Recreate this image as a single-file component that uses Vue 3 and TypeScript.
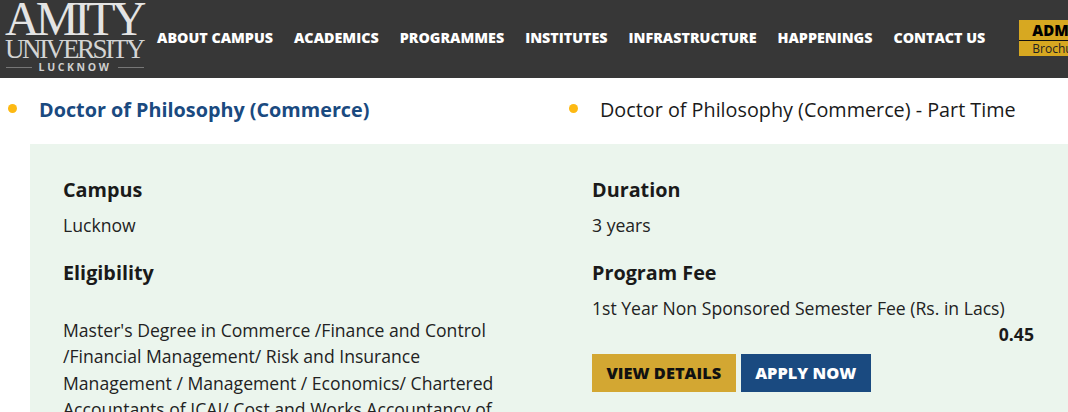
<script setup lang="ts">
const nav: string[] = ['About Campus','Academics','Programmes','Institutes','Infrastructure','Happenings','Contact Us']
</script>

<template>
  <div class="page">
    <header class="header">
      <div class="logo">
        <div class="l1">AMITY</div>
        <div class="l2">UNIVERSITY</div>
        <div class="l3"><i></i><span>LUCKNOW</span><i></i></div>
      </div>
      <nav class="nav">
        <a v-for="n in nav" :key="n">{{ n }}</a>
      </nav>
      <div class="adm">
        <div class="adm1">ADMISSIONS</div>
        <div class="adm2">Brochure</div>
      </div>
    </header>
    <div class="tabs">
      <div class="tab active"><b class="dot"></b><span>Doctor of Philosophy (Commerce)</span></div>
      <div class="tab"><b class="dot"></b><span>Doctor of Philosophy (Commerce) - Part Time</span></div>
    </div>
    <section class="panel">
      <div class="col left">
        <h4>Campus</h4>
        <p>Lucknow</p>
        <h4 class="second">Eligibility</h4>
        <p class="elig">Master's Degree in Commerce /Finance and Control /Financial Management/ Risk and Insurance Management / Management / Economics/ Chartered Accountants of ICAI/ Cost and Works Accountancy of</p>
      </div>
      <div class="col right">
        <h4>Duration</h4>
        <p>3 years</p>
        <h4 class="second">Program Fee</h4>
        <p class="feelabel">1st Year Non Sponsored Semester Fee (Rs. in Lacs)</p>
        <div class="fee">0.45</div>
        <div class="btns">
          <a class="btn gold">VIEW DETAILS</a>
          <a class="btn blue">APPLY NOW</a>
        </div>
      </div>
    </section>
  </div>
</template>

<style>
html, body { margin: 0; overflow: hidden; background: #fff; }
</style>

<style scoped>
.page { width: 1068px; height: 412px; overflow: hidden; font-family: "Open Sans", sans-serif; color: #1a1a1a; }
.header { height: 78px; background: #373737; display: flex; align-items: flex-start; box-sizing: border-box; padding-left: 5px; overflow: hidden; }
.logo { width: 140px; flex: none; color: #e4e4e4; font-family: "Liberation Serif", serif; margin-top: 1px; }
.l1 { font-size: 48px; line-height: 35px; letter-spacing: -4px; white-space: nowrap; height: 36px; }
.l2 { font-size: 27px; line-height: 23px; letter-spacing: -2.4px; white-space: nowrap; color: #d4d4d4; margin-top: 1px; }
.l3 { display: flex; align-items: center; gap: 7px; font-family: "Open Sans", sans-serif; font-weight: 700; font-size: 10.5px; line-height: 13px; letter-spacing: 2.6px; color: #cfcfcf; padding: 0 1px; }
.l3 i { flex: 1; height: 1px; background: #777; }
.nav { display: flex; gap: 21px; margin-left: 12px; margin-top: 28px; flex: none; }
.nav a { color: #fff; font-size: 14.3px; font-weight: 800; line-height: 19px; text-transform: uppercase; white-space: nowrap; }
.adm { margin-left: 34px; margin-top: 20px; width: 80px; flex: none; background: #d7a821; color: #000; overflow: hidden; }
.adm1 { font-size: 15px; font-weight: 800; line-height: 20px; padding-left: 13px; border-bottom: 1px solid #111; white-space: nowrap; }
.adm2 { font-size: 12px; line-height: 15px; padding-left: 13px; white-space: nowrap; color: #222; }
.tabs { display: flex; height: 66px; }
.tab { display: flex; font-size: 19.8px; line-height: 27px; padding-top: 18px; box-sizing: border-box; white-space: nowrap; color: #1a1a1a; }
.tab:first-child { width: 561px; padding-left: 8px; }
.tab.active { font-weight: 700; color: #1a4a80; }
.dot { width: 9px; height: 9px; border-radius: 50%; background: #fdb913; margin-top: 8px; margin-right: 22px; flex: none; }
.tab:last-child { padding-left: 8px; }
.panel { margin-left: 30px; height: 268px; background: #ebf5ed; display: flex; padding: 32px 0 0 33px; box-sizing: border-box; }
.col { flex: none; }
.left { width: 529px; }
.right { width: 442px; }
h4 { margin: 0; font-size: 19.8px; line-height: 27px; font-weight: 700; color: #1a1a1a; }
p { margin: 9px 0 0; font-size: 17.6px; line-height: 26.4px; color: #222; }
h4.second { margin-top: 21px; }
.feelabel { margin-top: 9px; }
.elig { width: 440px; margin-top: 30.6px; }
.fee { font-size: 17.6px; font-weight: 700; line-height: 24px; text-align: right; color: #1a1a1a; }
.btns { display: flex; gap: 5px; margin-top: 8px; }
.btn { display: block; height: 38px; line-height: 38px; font-size: 16.4px; font-weight: 800; padding: 0 14.5px; }
.gold { background: #d3a732; color: #111; }
.blue { background: #1a4a80; color: #fff; }
</style>
